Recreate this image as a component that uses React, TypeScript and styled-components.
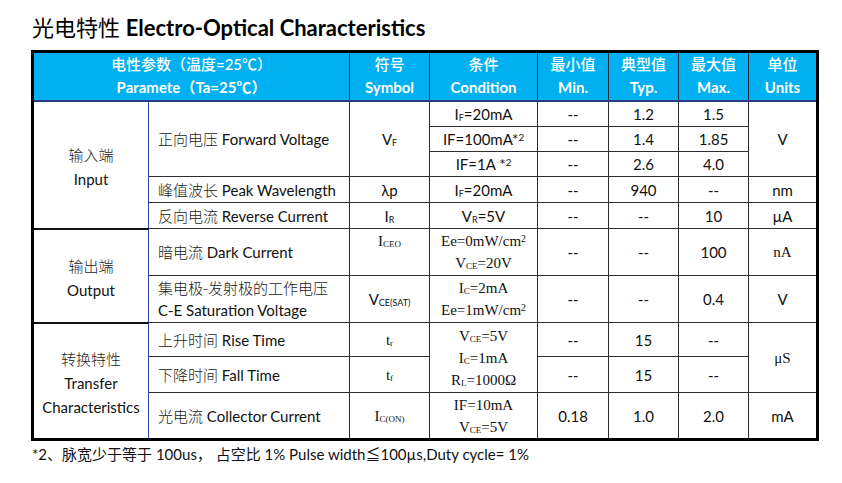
import React from 'react';
import styled, { createGlobalStyle, css } from 'styled-components';

const GlobalStyle = createGlobalStyle`
    html, body {
        margin: 0;
        padding: 0;
        background: #ffffff;
    }
`;

const SANS = `"Lato", "Noto Sans CJK SC", sans-serif`;
const SERIF = `"Liberation Serif", "Noto Sans CJK SC", serif`;

const Page = styled.div`
    width: 842px;
    height: 483px;
    box-sizing: border-box;
    padding: 14px 0 0 31px;
    font-family: ${SANS};
    color: #111;
`;

const Title = styled.h1`
    margin: 0 0 9px 1px;
    font-size: 22px;
    line-height: 27px;
    font-weight: 400;
    color: #000;

    b {
        font-weight: 700;
    }
`;

const Table = styled.table`
    width: 788px;
    border-collapse: collapse;
    table-layout: fixed;
    border: 3px solid #000;
`;

const Row = styled.tr<{ $h: number }>`
    height: ${(p) => p.$h}px;
`;

const Head = styled.th`
    background: #00b0f0;
    color: #fff;
    font-weight: 500;
    font-size: 15px;
    line-height: 23px;
    padding: 0;
    text-align: center;
    vertical-align: middle;
    border-left: 1.5px solid #1d2a3a;
    border-bottom: 2px solid #1f3c8e;

    b {
        display: block;
        font-weight: 700;
        font-size: 15px;
    }
`;

interface CellProps {
    $left?: boolean;
    $serif?: boolean;
    $top?: boolean;
    $group?: boolean;
    $label?: boolean;
}

const Cell = styled.td<CellProps>`
    padding: ${(p) => (p.$left ? '0 0 0 9px' : '0')};
    font-size: 15px;
    line-height: 22px;
    text-align: ${(p) => (p.$left ? 'left' : 'center')};
    vertical-align: ${(p) => (p.$top ? 'top' : 'middle')};
    border: 1.5px solid #2e2e2e;
    font-family: ${(p) => (p.$serif ? SERIF : SANS)};
    white-space: nowrap;
    overflow: hidden;
    ${(p) =>
        p.$top &&
        css`
            padding-top: 1px;
        `}
    ${(p) =>
        p.$group &&
        css`
            padding-top: 4px;
            border-right: 1.5px solid #3342a6;
            border-bottom: 2px solid #111;
            line-height: 24px;
        `}
    ${(p) =>
        p.$label &&
        css`
            border-left: 1.5px solid #3342a6;
        `}
`;

const Zh = styled.span`
    font-family: "Noto Sans CJK SC", sans-serif;
    font-weight: 300;
    color: #222;
`;

const Sub = styled.sub`
    font-size: 0.6em;
    vertical-align: -0.15em;
    line-height: 0;
`;

const Sup = styled.sup`
    font-size: 0.66em;
    vertical-align: 0.45em;
    line-height: 0;
`;

const Footnote = styled.p`
    margin: 3px 0 0 1px;
    font-size: 15px;
    line-height: 20px;
    color: #111;
`;

const widths = [116, 201, 80, 108, 71, 70, 70, 69];

export default function App() {
    return (
        <>
            <GlobalStyle />
            <Page>
                <Title>
                    光电特性 <b>Electro-Optical Characteristics</b>
                </Title>
                <Table>
                    <colgroup>
                        {widths.map((w, i) => (
                            <col key={i} style={{ width: w }} />
                        ))}
                    </colgroup>
                    <thead>
                        <Row $h={49}>
                            <Head colSpan={2}>
                                电性参数（温度=25℃）<b>Paramete（Ta=25℃）</b>
                            </Head>
                            <Head>
                                符号<b>Symbol</b>
                            </Head>
                            <Head>
                                条件<b>Condition</b>
                            </Head>
                            <Head>
                                最小值<b>Min.</b>
                            </Head>
                            <Head>
                                典型值<b>Typ.</b>
                            </Head>
                            <Head>
                                最大值<b>Max.</b>
                            </Head>
                            <Head>
                                单位<b>Units</b>
                            </Head>
                        </Row>
                    </thead>
                    <tbody>
                        <Row $h={26}>
                            <Cell rowSpan={5} $group>
                                <Zh>输入端</Zh>
                                <br />
                                Input
                            </Cell>
                            <Cell rowSpan={3} $left $label>
                                <Zh>正向电压</Zh> Forward Voltage
                            </Cell>
                            <Cell rowSpan={3}>
                                V<Sub>F</Sub>
                            </Cell>
                            <Cell>
                                I<Sub>F</Sub>=20mA
                            </Cell>
                            <Cell>--</Cell>
                            <Cell>1.2</Cell>
                            <Cell>1.5</Cell>
                            <Cell rowSpan={3}>V</Cell>
                        </Row>
                        <Row $h={25}>
                            <Cell>
                                IF=100mA*<Sup>2</Sup>
                            </Cell>
                            <Cell>--</Cell>
                            <Cell>1.4</Cell>
                            <Cell>1.85</Cell>
                        </Row>
                        <Row $h={25}>
                            <Cell>
                                IF=1A *<Sup>2</Sup>
                            </Cell>
                            <Cell>--</Cell>
                            <Cell>2.6</Cell>
                            <Cell>4.0</Cell>
                        </Row>
                        <Row $h={26}>
                            <Cell $left $label>
                                <Zh>峰值波长</Zh> Peak Wavelength
                            </Cell>
                            <Cell>λp</Cell>
                            <Cell>
                                I<Sub>F</Sub>=20mA
                            </Cell>
                            <Cell>--</Cell>
                            <Cell>940</Cell>
                            <Cell>--</Cell>
                            <Cell>nm</Cell>
                        </Row>
                        <Row $h={26}>
                            <Cell $left $label>
                                <Zh>反向电流</Zh> Reverse Current
                            </Cell>
                            <Cell>
                                I<Sub>R</Sub>
                            </Cell>
                            <Cell>
                                V<Sub>R</Sub>=5V
                            </Cell>
                            <Cell>--</Cell>
                            <Cell>--</Cell>
                            <Cell>10</Cell>
                            <Cell>µA</Cell>
                        </Row>
                        <Row $h={47}>
                            <Cell rowSpan={2} $group>
                                <Zh>输出端</Zh>
                                <br />
                                Output
                            </Cell>
                            <Cell $left $label>
                                <Zh>暗电流</Zh> Dark Current
                            </Cell>
                            <Cell $serif $top>
                                I<Sub>CEO</Sub>
                            </Cell>
                            <Cell $serif>
                                Ee=0mW/cm<Sup>2</Sup>
                                <br />
                                V<Sub>CE</Sub>=20V
                            </Cell>
                            <Cell>--</Cell>
                            <Cell>--</Cell>
                            <Cell>100</Cell>
                            <Cell $serif>nA</Cell>
                        </Row>
                        <Row $h={47}>
                            <Cell $left $label>
                                <Zh>集电极-发射极的工作电压</Zh>
                                <br />
                                C-E Saturation Voltage
                            </Cell>
                            <Cell>
                                V<Sub>CE(SAT)</Sub>
                            </Cell>
                            <Cell $serif>
                                I<Sub>C</Sub>=2mA
                                <br />
                                Ee=1mW/cm<Sup>2</Sup>
                            </Cell>
                            <Cell>--</Cell>
                            <Cell>--</Cell>
                            <Cell>0.4</Cell>
                            <Cell>V</Cell>
                        </Row>
                        <Row $h={34}>
                            <Cell rowSpan={3} $group>
                                <Zh>转换特性</Zh>
                                <br />
                                Transfer
                                <br />
                                Characteristics
                            </Cell>
                            <Cell $left $label>
                                <Zh>上升时间</Zh> Rise Time
                            </Cell>
                            <Cell $serif>
                                t<Sub>r</Sub>
                            </Cell>
                            <Cell rowSpan={2} $serif>
                                V<Sub>CE</Sub>=5V
                                <br />
                                I<Sub>C</Sub>=1mA
                                <br />
                                R<Sub>L</Sub>=1000Ω
                            </Cell>
                            <Cell>--</Cell>
                            <Cell>15</Cell>
                            <Cell>--</Cell>
                            <Cell rowSpan={2} $serif>
                                μS
                            </Cell>
                        </Row>
                        <Row $h={36}>
                            <Cell $left $label>
                                <Zh>下降时间</Zh> Fall Time
                            </Cell>
                            <Cell $serif>
                                t<Sub>f</Sub>
                            </Cell>
                            <Cell>--</Cell>
                            <Cell>15</Cell>
                            <Cell>--</Cell>
                        </Row>
                        <Row $h={47}>
                            <Cell $left $label>
                                <Zh>光电流</Zh> Collector Current
                            </Cell>
                            <Cell $serif>
                                I<Sub>C(ON)</Sub>
                            </Cell>
                            <Cell $serif>
                                IF=10mA
                                <br />
                                V<Sub>CE</Sub>=5V
                            </Cell>
                            <Cell>0.18</Cell>
                            <Cell>1.0</Cell>
                            <Cell>2.0</Cell>
                            <Cell>mA</Cell>
                        </Row>
                    </tbody>
                </Table>
                <Footnote>
                    *2、脉宽少于等于 100us， 占空比 1% Pulse width≦100µs,Duty cycle= 1%
                </Footnote>
            </Page>
        </>
    );
}
